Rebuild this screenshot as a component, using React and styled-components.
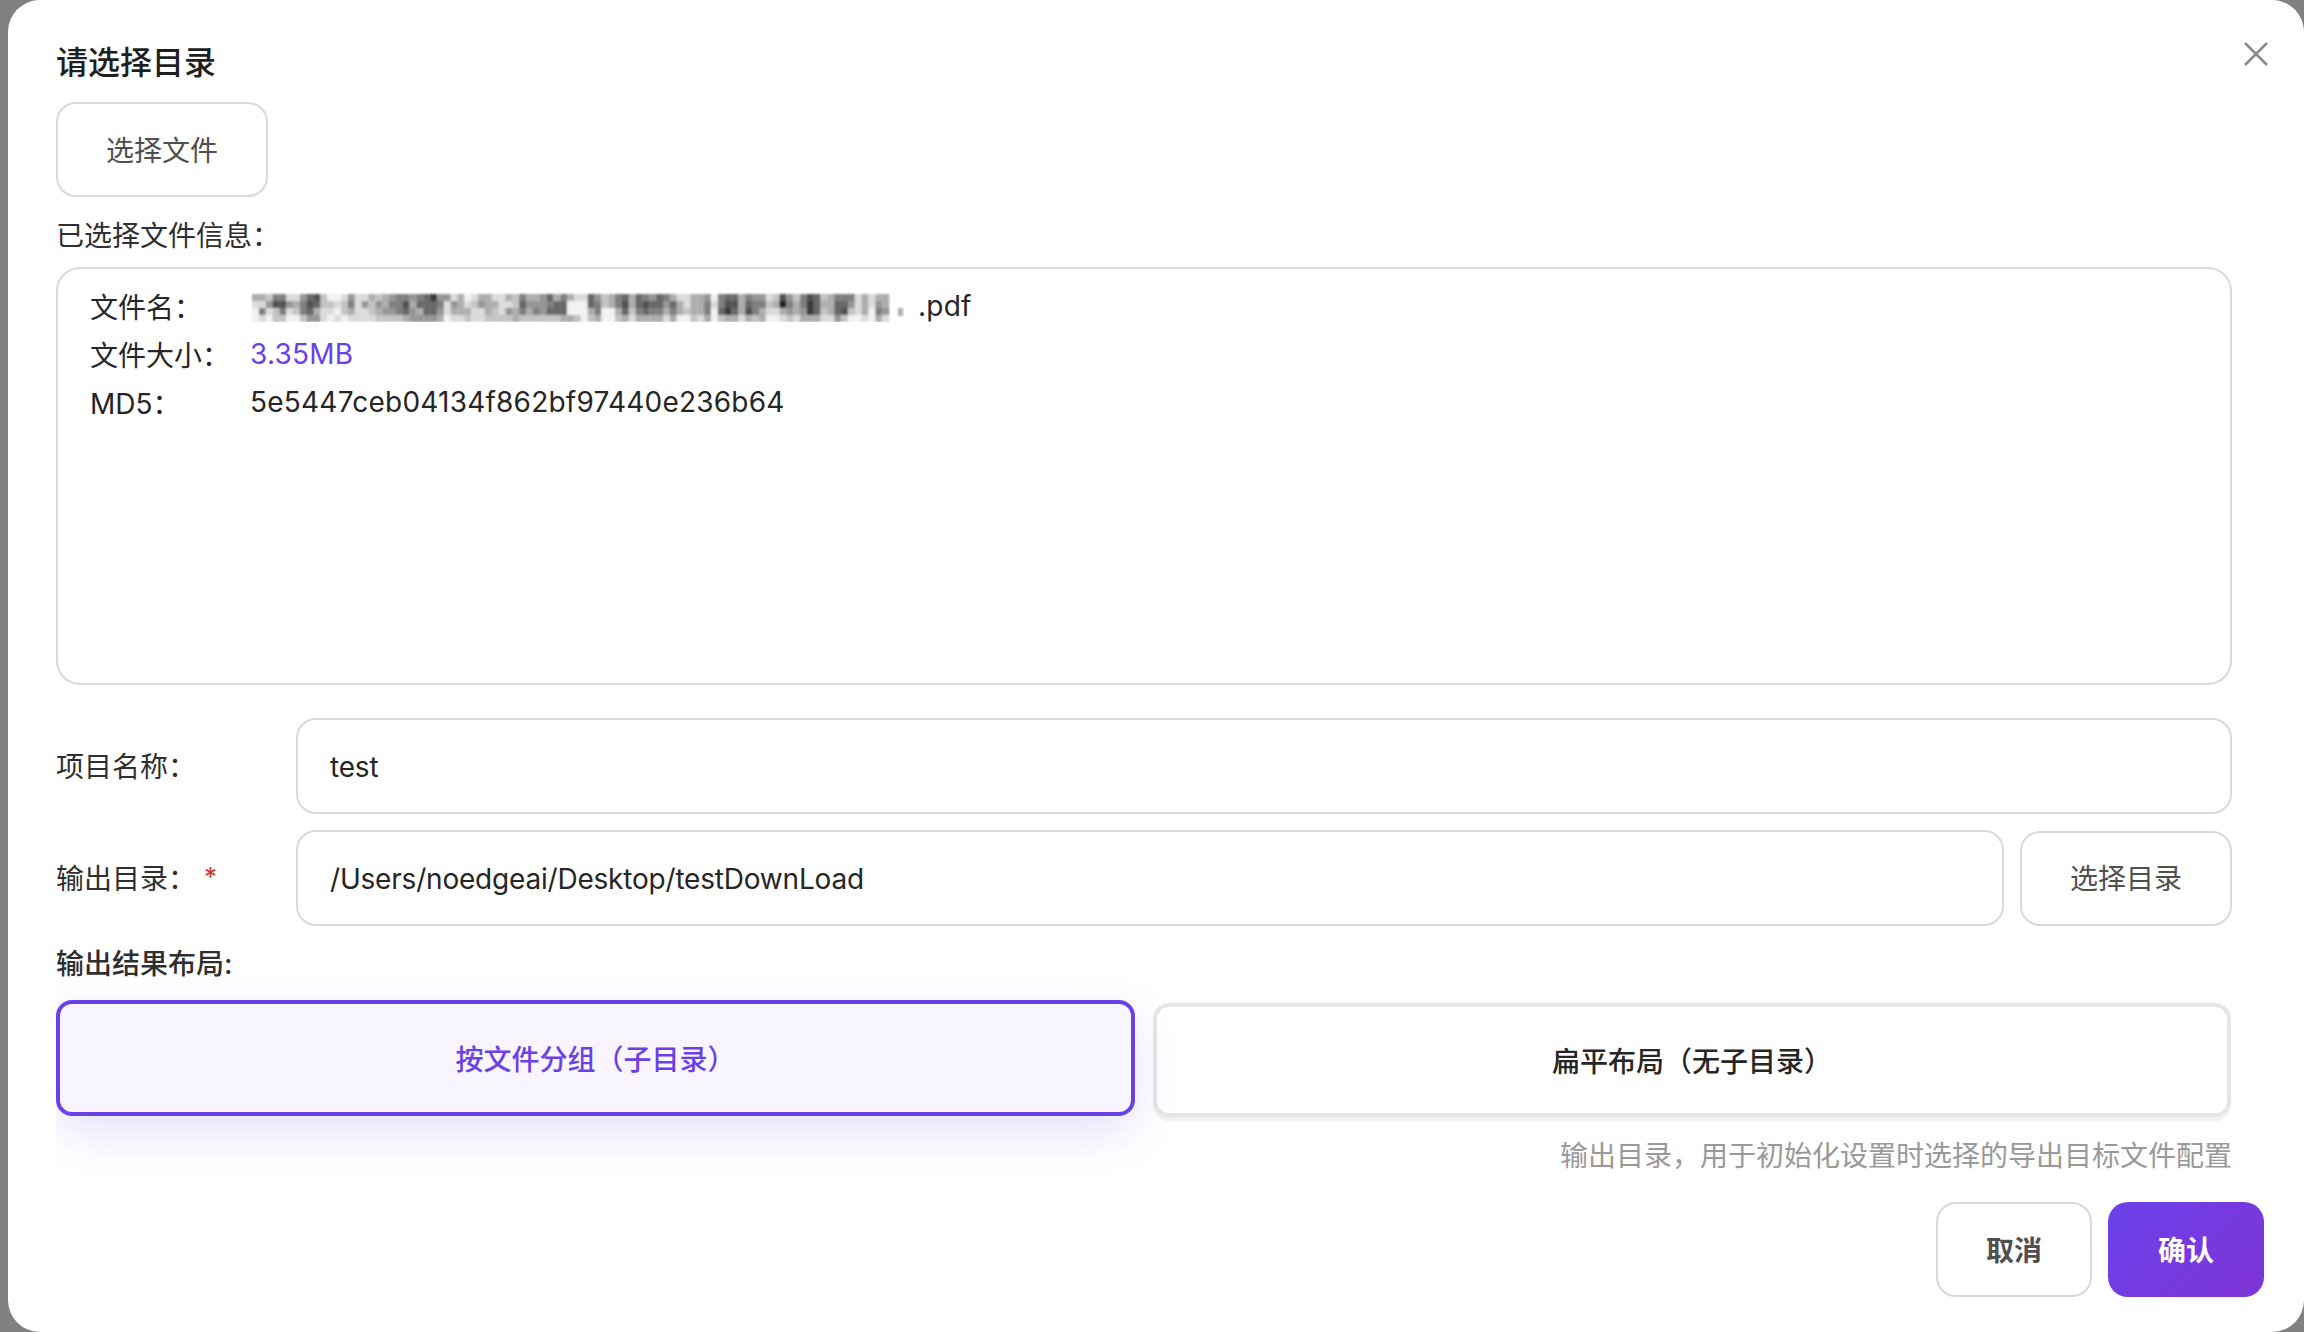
import React from "react";
import styled, { createGlobalStyle } from "styled-components";

const Global = createGlobalStyle`
  html, body { margin: 0; padding: 0; background: #808080; }
  body { font-family: Inter, "Noto Sans CJK SC", sans-serif; }
  * { box-sizing: border-box; }
`;
const Page = styled.div`
  width: 2304px; height: 1332px; padding-left: 8px; background: #808080; overflow: hidden;
`;
const Modal = styled.div`
  position: relative; width: 2296px; height: 1332px; background: #fff; border-radius: 32px;
  padding: 41px 72px 0 48px; display: flex; flex-direction: column; color: #262626;
  font-size: 28px;
`;
const Title = styled.h2`
  margin: 0 0 17px; font-size: 32px; line-height: 44px; font-weight: 500; color: #1f1f1f;
`;
const CloseBtn = styled.button`
  position: absolute; top: 40px; right: 34px; width: 28px; height: 28px; padding: 0;
  border: 0; background: none; color: #8a8a8a; display: flex;
`;
const OutlineButton = styled.button`
  flex: none; height: 95px; width: ${p => p.$w || 212}px; background: #fff; padding: 0 0 2px;
  border: 2px solid #d9d9d9; border-radius: 20px; font: inherit; font-size: 28px; color: #4f4f4f;
  font-weight: ${p => p.$bold ? 600 : 400};
`;
const Label = styled.div`
  height: 40px; line-height: 40px; font-size: 28px; margin-top: 19px; margin-bottom: 11px;
  color: #2f2f2f;
`;
const SectionLabel = styled.div`
  height: 40px; line-height: 40px; font-size: 28px; margin: 2px 0 16px; font-weight: 500; color: #2f2f2f;
`;
const InfoBox = styled.div`
  height: 418px; border: 2px solid #d9d9d9; border-radius: 24px; padding: 13px 32px;
  margin-bottom: 33px;
`;
const InfoRow = styled.div`
  display: flex; height: 48px; align-items: center; color: #262626;
`;
const InfoKey = styled.div` width: 160px; flex: none; `;
const InfoVal = styled.div`
  display: flex; align-items: center; letter-spacing: .22px; color: ${p => p.$accent ? "#6a41e6" : "#262626"};
`;
const Blur = styled.svg` display: block; `;
const FormRow = styled.div`
  display: flex; align-items: center; gap: 16px; margin-bottom: 16px; height: 96px;
`;
const FormLabel = styled.div`
  width: 224px; flex: none; font-size: 28px; color: #2f2f2f; display: flex; padding-bottom: 2px;
`;
const Req = styled.span` color: #c8371f; margin-left: 8px; padding-top: 4px; font-size: 26px; `;
const Field = styled.div`
  flex: 1; height: 96px; border: 2px solid #d9d9d9; letter-spacing: -.2px;
  border-radius: 20px; padding: 2px 32px 0; display: flex; align-items: center; color: #262626;
`;
const Grid = styled.div` display: grid; grid-template-columns: 1079px 1078px; gap: 18px; `;
const RadioCard = styled.div`
  height: ${p => p.$on ? 116 : 114}px; margin-top: ${p => p.$on ? 0 : 3}px;
  border-radius: 16px; display: flex; align-items: center; justify-content: center;
  font-size: 28px; font-weight: 500; padding-bottom: 1px;
  ${p => p.$on
    ? `border: 4px solid #6a41e6; background: #f8f5ff; color: #6a41e6;
       box-shadow: 0 16px 48px rgba(106,65,230,.16); clip-path: inset(-40px -40px -70px 0);`
    : `border: 4px solid #e6e6e6; background: #fff; color: #262626; box-shadow: 0 4px 2px rgba(0,0,0,.06);`}
`;
const Hint = styled.div`
  margin-top: 19px; height: 40px; line-height: 40px; text-align: right; color: #999; font-size: 28px;
`;
const Footer = styled.div`
  margin-top: 26px; margin-right: -32px; display: flex; justify-content: flex-end; gap: 16px;
`;
const Primary = styled.button`
  width: 156px; height: 95px; border: 0; border-radius: 20px; font: inherit; font-size: 28px;
  font-weight: 600; color: #fff; padding: 0 0 2px; background: linear-gradient(135deg, #6a41ea, #8034d6);
`;

const MOSAIC = [
  "3325511467200141132345545684413013311325334635" + "31164235636546531133405663544127425762355513133",
  "1147743576221251424355736665143124331126444566" + "00065235736766463133515773655239535863366413143",
  "0512512563110231123445643664133311321435354666" + "00035003625655353233506863753113434862367213054",
  "0102200244101011112222344443011211222232222223" + "32023002313333130021302331323001213331142001031",
];
const CELL = 6.85;

const Mosaic = () => (
  <Blur width="668" height="32" viewBox="0 0 668 32">
    <defs><filter id="mosaicBlur"><feGaussianBlur stdDeviation="0.9" /></filter></defs>
    <g filter="url(#mosaicBlur)">
      {MOSAIC.map((row, r) => [...row].map((d, c) => {
        const v = 242 - Number(d) * 23;
        return <rect key={r + "-" + c} x={2 + c * CELL} y={4 + r * 7} width={CELL + 0.2} height="7.2" fill={`rgb(${v},${v},${v})`} />;
      }))}
      <rect x="648" y="18" width="5" height="8" fill="#aaa" />
    </g>
  </Blur>
);

export default function App() {
  return (
    <Page>
      <Global />
      <Modal>
        <CloseBtn aria-label="close">
          <svg width="28" height="28" viewBox="0 0 28 28" fill="none" stroke="currentColor" strokeWidth="2.5">
            <path d="M3 3 L25 25 M25 3 L3 25" />
          </svg>
        </CloseBtn>
        <Title>请选择目录</Title>
        <OutlineButton>选择文件</OutlineButton>
        <Label>已选择文件信息：</Label>
        <InfoBox>
          <InfoRow><InfoKey>文件名：</InfoKey><InfoVal><Mosaic />.pdf</InfoVal></InfoRow>
          <InfoRow><InfoKey>文件大小：</InfoKey><InfoVal $accent>3.35MB</InfoVal></InfoRow>
          <InfoRow><InfoKey>MD5：</InfoKey><InfoVal>5e5447ceb04134f862bf97440e236b64</InfoVal></InfoRow>
        </InfoBox>
        <FormRow>
          <FormLabel>项目名称：</FormLabel>
          <Field>test</Field>
        </FormRow>
        <FormRow>
          <FormLabel>输出目录：<Req>*</Req></FormLabel>
          <Field>/Users/noedgeai/Desktop/testDownLoad</Field>
          <OutlineButton>选择目录</OutlineButton>
        </FormRow>
        <SectionLabel>输出结果布局:</SectionLabel>
        <Grid>
          <RadioCard $on>按文件分组（子目录）</RadioCard>
          <RadioCard>扁平布局（无子目录）</RadioCard>
        </Grid>
        <Hint>输出目录，用于初始化设置时选择的导出目标文件配置</Hint>
        <Footer>
          <OutlineButton $w={156} $bold>取消</OutlineButton>
          <Primary>确认</Primary>
        </Footer>
      </Modal>
    </Page>
  );
}
